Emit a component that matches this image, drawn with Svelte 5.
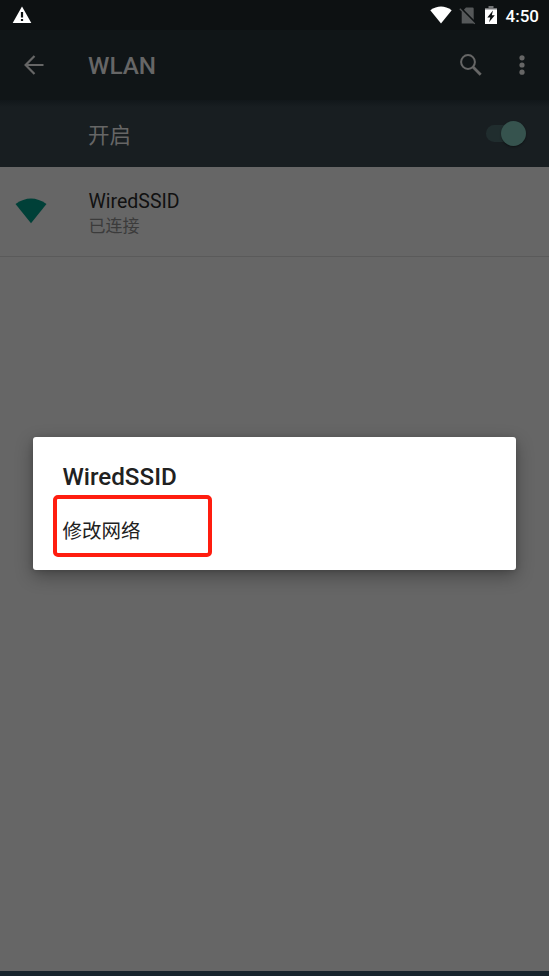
<script>
    let enabled = true;
    let menuOpen = true;

    const networks = [
        { ssid: 'WiredSSID', status: '已连接' }
    ];
    let selected = networks[0];

    const openMenu = (network) => {
        return () => {
            selected = network;
            menuOpen = true;
        }
    }
</script>

<div class="screen">
    <div class="status">
        <svg class="warning" viewBox="0 0 20 18" width="20" height="18">
            <path fill="#fff" d="M10 0.5 L19.3 17 H0.7 Z" />
            <path fill="#0d1112" d="M8.9 6h2.2v5.5H8.9z M8.9 13h2.2v2H8.9z" />
        </svg>
        <div class="indicators">
            <svg class="signal" viewBox="0 0 22 18" width="22" height="18">
                <path fill="#fff" d="M0.3 4.2 Q11 -3.3 21.7 4.2 L11 17.6 Z" />
            </svg>
            <svg class="sim" viewBox="0 0 17 18" width="17" height="18">
                <path fill="#555859" d="M7 0.5h6.5q1.2 0 1.2 1.2v14.8H2.7V5z" />
                <path stroke="#0d1112" stroke-width="2" d="M1.5 0.8 L17 16.3" />
                <path stroke="#555859" stroke-width="1.3" d="M0.8 1.8 L15.8 16.9" />
            </svg>
            <svg class="battery" viewBox="0 0 12 18" width="12" height="18">
                <path fill="#737576" d="M3.5 0h5v2H12v2H0V2h3.5z" />
                <path fill="#fff" d="M0 3.5h12V18H0z" />
                <path fill="#0d1112" d="M8 4.5 L2.3 11.6 H5.3 L4 16.3 L9.8 9.2 H6.8 Z" />
            </svg>
            <span class="clock">4:50</span>
        </div>
    </div>

    <header>
        <svg class="back" viewBox="0 0 20 20" width="20" height="20">
            <path fill="none" stroke="#666" stroke-width="2.2" d="M19.5 10H2 M10.5 1 L1.6 10 L10.5 19" />
        </svg>
        <h1>WLAN</h1>
        <svg class="search" viewBox="0 0 22 22" width="22" height="22">
            <circle cx="8" cy="8" r="6.9" fill="none" stroke="#666" stroke-width="2" />
            <path stroke="#666" stroke-width="2.8" d="M13 13 L20.7 20.7" />
        </svg>
        <svg class="more" viewBox="0 0 6 20" width="6" height="20">
            <circle cx="3" cy="2.8" r="2.6" fill="#666" />
            <circle cx="3" cy="10" r="2.6" fill="#666" />
            <circle cx="3" cy="17.2" r="2.6" fill="#666" />
        </svg>
    </header>

    <div class="toggle">
        <span>{enabled ? '开启' : '关闭'}</span>
        <button class="switch" class:on={enabled} aria-label="WLAN" on:click={() => enabled = !enabled}>
            <i></i>
        </button>
    </div>

    <main>
        {#each networks as network (network.ssid)}
            <button class="network" on:click={openMenu(network)}>
                <svg viewBox="0 0 32 26" width="32" height="26">
                    <path fill="#004038" d="M0.5 6 Q16 -5 31.5 6 L16 25.3 Z" />
                </svg>
                <span class="info">
                    <span class="ssid">{network.ssid}</span>
                    <span class="state">{network.status}</span>
                </span>
            </button>
        {/each}
    </main>
    <div class="edge"></div>

    {#if menuOpen}
        <div class="dialog">
            <h2>{selected.ssid}</h2>
            <button class="modify" on:click={() => menuOpen = false}>修改网络</button>
        </div>
    {/if}
</div>

<style>
    :global(body) {
        margin: 0;
        background: #666;
    }
    .screen {
        position: relative;
        display: flex;
        flex-direction: column;
        height: 976px;
        overflow: hidden;
        background: #666;
        font-family: Roboto, "Noto Sans CJK SC", sans-serif;
    }
    svg {
        display: block;
        flex: none;
    }
    button {
        border: none;
        padding: 0;
        margin: 0;
        background: none;
        font-family: inherit;
        text-align: left;
    }
    h1, h2 {
        margin: 0;
        font-weight: 500;
    }

    .status {
        display: flex;
        justify-content: space-between;
        height: 30px;
        box-sizing: border-box;
        padding: 6px 10px 0 12px;
        background: #0d1112;
    }
    .indicators {
        display: flex;
    }
    .sim {
        margin: 1px 0 0 7px;
    }
    .battery {
        margin-left: 9px;
    }
    .clock {
        margin-left: 9px;
        color: #fff;
        font-size: 17px;
        font-weight: 500;
        line-height: 21px;
    }

    header {
        display: flex;
        align-items: center;
        height: 70px;
        box-sizing: border-box;
        padding: 0 24px 1px;
        background: #101517;
    }
    h1 {
        flex: 1;
        margin: 2px 0 0 44px;
        color: #666;
        font-size: 24.3px;
        line-height: 30px;
    }
    .more {
        margin-left: 37px;
    }

    .toggle {
        display: flex;
        align-items: center;
        justify-content: space-between;
        height: 67px;
        box-sizing: border-box;
        padding: 0 23px 1px 88px;
        background: linear-gradient(#11171a, #181e21 7px);
        color: #666;
        font-size: 21.5px;
    }
    .switch {
        display: flex;
        align-items: center;
        width: 40px;
        height: 17px;
        border-radius: 9px;
        background: linear-gradient(90deg, #202d2e 32px, transparent 32px);
    }
    .switch i {
        width: 25px;
        height: 25px;
        border-radius: 50%;
        background: #2e3436;
        box-shadow: 0 1px 2px rgba(0, 0, 0, 0.4);
    }
    .switch.on i {
        margin-left: 15px;
        background: #36534e;
    }

    main {
        flex: 1;
    }
    .network {
        display: flex;
        align-items: center;
        width: 100%;
        height: 90px;
        padding: 0 15px 1px;
        border-bottom: 1px solid #5a5a5a;
    }
    .info {
        display: flex;
        flex-direction: column;
        margin-left: 41.5px;
        padding-top: 4px;
    }
    .ssid {
        color: #111;
        font-size: 19.5px;
        line-height: 25px;
    }
    .state {
        color: #3b3b3b;
        font-size: 17px;
        line-height: 24px;
    }
    .edge {
        height: 5px;
        background: #17242c;
    }

    .dialog {
        position: absolute;
        left: 33px;
        top: 437px;
        width: 482.5px;
        height: 133px;
        box-sizing: border-box;
        padding: 24px 20px 0;
        border-radius: 3px;
        background: #fff;
        box-shadow: 0 6px 18px rgba(0, 0, 0, 0.32), 0 1px 5px rgba(0, 0, 0, 0.15);
    }
    h2 {
        padding-left: 9.5px;
        color: #212121;
        font-size: 24.2px;
        line-height: 32px;
    }
    .modify {
        display: block;
        width: 159px;
        height: 62px;
        box-sizing: border-box;
        margin-top: 1.5px;
        padding: 8px 0 0 5.5px;
        border: 4px solid #ff1d0f;
        border-radius: 5px;
        color: #212121;
        font-size: 19.5px;
    }
</style>
